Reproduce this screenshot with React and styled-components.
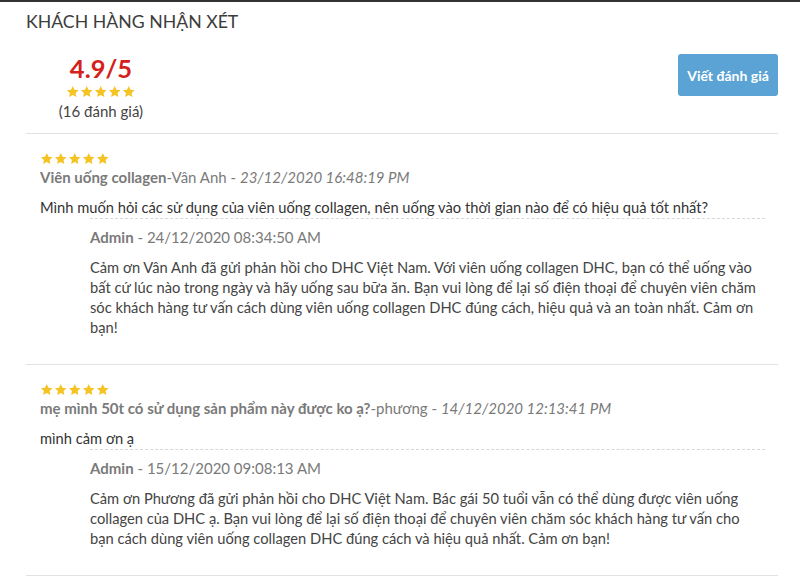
import styled, { createGlobalStyle } from 'styled-components'

const GlobalStyle = createGlobalStyle`
  body {
    margin: 0;
    background: #fff;
    font-family: Lato, "Open Sans", Arial, sans-serif;
    color: #333;
  }
`

const reviews = [
  {
    title: 'Viên uống collagen',
    name: 'Vân Anh',
    date: '23/12/2020 16:48:19 PM',
    body: 'Mình muốn hỏi các sử dụng của viên uống collagen, nên uống vào thời gian nào để có hiệu quả tốt nhất?',
    replyDate: '24/12/2020 08:34:50 AM',
    reply:
      'Cảm ơn Vân Anh đã gửi phản hồi cho DHC Việt Nam. Với viên uống collagen DHC, bạn có thể uống vào bất cứ lúc nào trong ngày và hãy uống sau bữa ăn. Bạn vui lòng để lại số điện thoại để chuyên viên chăm sóc khách hàng tư vấn cách dùng viên uống collagen DHC đúng cách, hiệu quả và an toàn nhất. Cảm ơn bạn!'
  },
  {
    title: 'mẹ mình 50t có sử dụng sản phẩm này được ko ạ?',
    name: 'phương',
    date: '14/12/2020 12:13:41 PM',
    body: 'mình cảm ơn ạ',
    replyDate: '15/12/2020 09:08:13 AM',
    reply:
      'Cảm ơn Phương đã gửi phản hồi cho DHC Việt Nam. Bác gái 50 tuổi vẫn có thể dùng được viên uống collagen của DHC ạ. Bạn vui lòng để lại số điện thoại để chuyên viên chăm sóc khách hàng tư vấn cho bạn cách dùng viên uống collagen DHC đúng cách và hiệu quả nhất. Cảm ơn bạn!'
  }
]

function Star ({ size }) {
  return (
    <svg width={size} height={size} viewBox='0 0 24 24'>
      <path
        fill='#f6c324'
        d='M12 1.8l3.1 6.6 7.2.9-5.3 5 1.4 7.1L12 17.9l-6.4 3.5 1.4-7.1-5.3-5 7.2-.9z'
      />
    </svg>
  )
}

function Stars ({ size }) {
  return (
    <StarRow>
      {[0, 1, 2, 3, 4].map((i) => <Star key={i} size={size} />)}
    </StarRow>
  )
}

function App () {
  return (
    <Page>
      <GlobalStyle />
      <Heading>KHÁCH HÀNG NHẬN XÉT</Heading>
      <Summary>
        <RatingBox>
          <Score>4.9/5</Score>
          <Stars size={13.5} />
          <Count>(16 đánh giá)</Count>
        </RatingBox>
        <WriteButton>Viết đánh giá</WriteButton>
      </Summary>

      {reviews.map((r, i) => (
        <Review key={i}>
          <Stars size={13.5} />
          <Meta>
            <b>{r.title}</b>-{r.name} - <i>{r.date}</i>
          </Meta>
          <Body>{r.body}</Body>
          <Reply>
            <Meta>
              <b>Admin</b> - {r.replyDate}
            </Meta>
            <ReplyText>{r.reply}</ReplyText>
          </Reply>
        </Review>
      ))}
    </Page>
  )
}

const Page = styled.div`
  border-top: 2px solid #333;
  padding: 0 22px 0 26px;
`

const Heading = styled.h2`
  margin: 8px 0 0;
  font-size: 17.7px;
  line-height: 24px;
  font-weight: 400;
  color: #3c3c3c;
`

const Summary = styled.div`
  display: flex;
  justify-content: space-between;
  align-items: flex-start;
  padding: 20px 0 13px;
  border-bottom: 1px solid #e2e2e2;
`

const RatingBox = styled.div`
  width: 150px;
  display: flex;
  flex-direction: column;
  align-items: center;
`

const Score = styled.div`
  font-size: 25.5px;
  line-height: 28px;
  font-weight: 700;
  color: #d4211b;
`

const StarRow = styled.div`
  display: flex;
  gap: 0.5px;
  height: 12px;
  align-items: center;
  margin-top: 4px;
`

const Count = styled.div`
  font-size: 15px;
  line-height: 18px;
  color: #444;
  margin-top: 4px;
`

const WriteButton = styled.button`
  width: 100px;
  height: 42px;
  border: none;
  border-radius: 3px;
  background: #5aa3d4;
  color: #fff;
  font-family: Lato, Arial, sans-serif;
  font-size: 14px;
  font-weight: 700;
`

const Review = styled.div`
  padding: 15px 0 27px 14px;
  border-bottom: 1px solid #e2e2e2;
`

const Meta = styled.div`
  font-size: 15px;
  line-height: 20px;
  color: #7a7a7a;
  margin-top: 2px;

  b {
    font-weight: 700;
  }
`

const Body = styled.p`
  margin: 10px 0 1px;
  font-size: 14.7px;
  line-height: 20px;
  color: #333;
`

const Reply = styled.div`
  margin: 0 13px 0 50px;
  border-top: 1px dashed #d8d8d8;
  padding-top: 6px;
`

const ReplyText = styled.p`
  margin: 10px 0 0;
  font-size: 14.7px;
  line-height: 20px;
  color: #444;
`

export default App
